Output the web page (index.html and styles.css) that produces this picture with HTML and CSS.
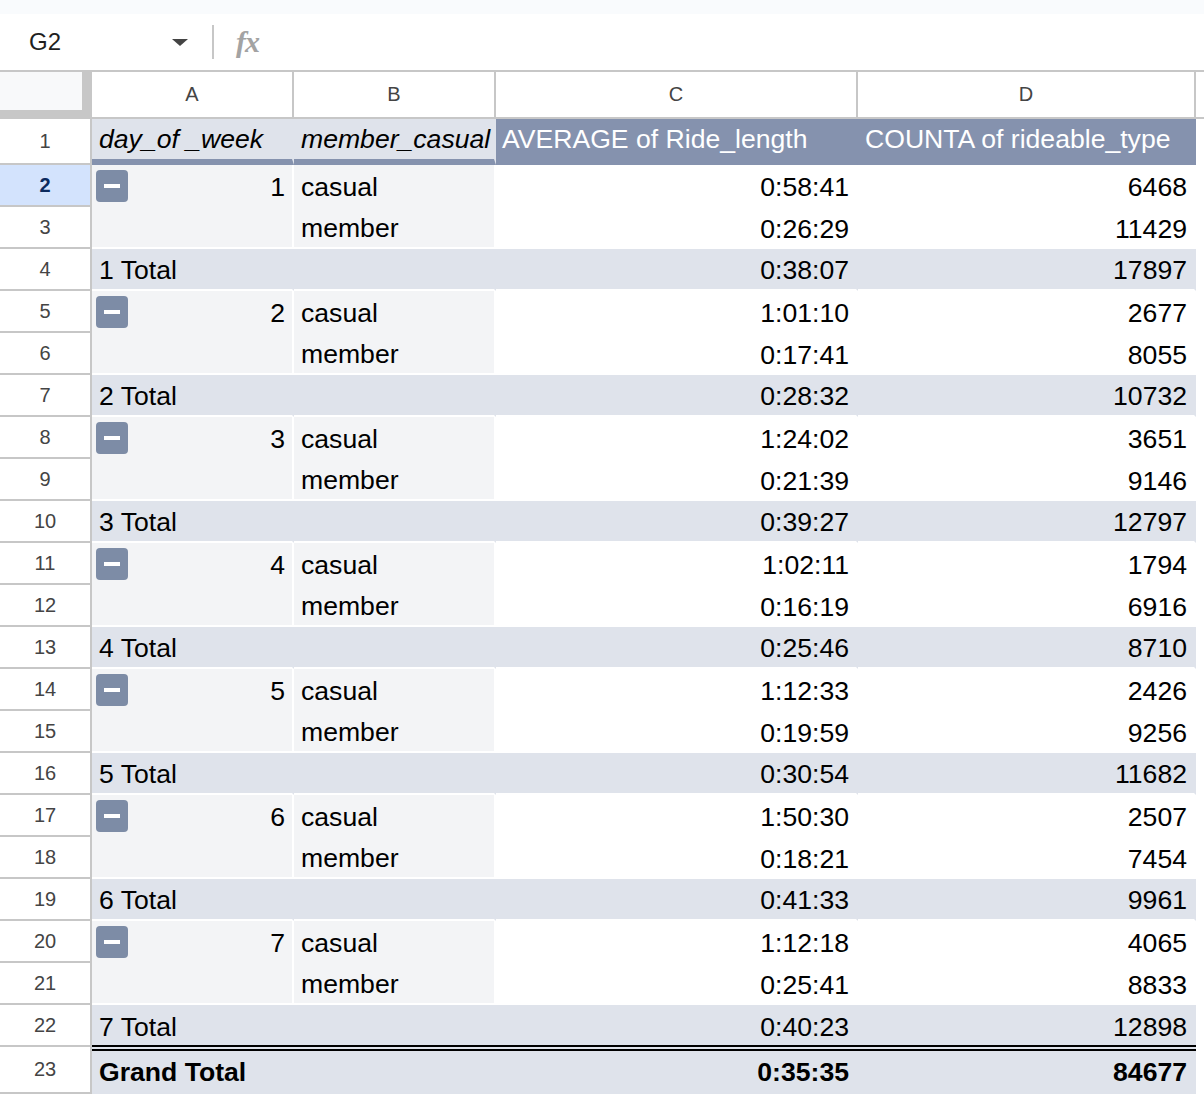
FILE: index.html
```html
<!DOCTYPE html>
<html>
<head>
<meta charset="utf-8">
<link rel="stylesheet" href="styles.css">
</head>
<body>
<div class="app">
  <div class="strip"></div>
  <div class="fbar">
    <div class="namebox"><span class="ref">G2</span><span class="caret"></span></div>
    <div class="sep"></div>
    <span class="fx">fx</span>
  </div>
  <div class="grid">
    <div class="row colhead">
      <div class="corner"></div>
      <div class="ch colA">A</div><div class="ch colB">B</div><div class="ch colC">C</div><div class="ch colD">D</div><div class="ch colE"></div>
    </div>

    <div class="row h1">
      <div class="rn">1</div>
      <div class="cell colA lite hd"><i>day_of _week</i></div>
      <div class="cell colB lite hd"><i>member_casual</i></div>
      <div class="cell colC dark hd">AVERAGE of Ride_length</div>
      <div class="cell colD dark hd">COUNTA of rideable_type</div>
      <div class="cell colE"></div>
    </div>

    <div class="row">
      <div class="rn sel">2</div>
      <div class="cell colA grp sepr"><span class="btn"></span><span class="num">1</span></div>
      <div class="cell colB grp sepr">casual</div>
      <div class="cell colC val">0:58:41</div>
      <div class="cell colD val">6468</div>
      <div class="cell colE"></div>
    </div>
    <div class="row">
      <div class="rn">3</div>
      <div class="cell colA grp sepr sepb"></div>
      <div class="cell colB grp sepr sepb">member</div>
      <div class="cell colC val">0:26:29</div>
      <div class="cell colD val">11429</div>
      <div class="cell colE"></div>
    </div>
    <div class="row">
      <div class="rn">4</div>
      <div class="cell colA tot sepb">1 Total</div>
      <div class="cell colB tot sepb"></div>
      <div class="cell colC tot val sepb">0:38:07</div>
      <div class="cell colD tot val sepb">17897</div>
      <div class="cell colE"></div>
    </div>

    <div class="row">
      <div class="rn">5</div>
      <div class="cell colA grp sepr"><span class="btn"></span><span class="num">2</span></div>
      <div class="cell colB grp sepr">casual</div>
      <div class="cell colC val">1:01:10</div>
      <div class="cell colD val">2677</div>
      <div class="cell colE"></div>
    </div>
    <div class="row">
      <div class="rn">6</div>
      <div class="cell colA grp sepr sepb"></div>
      <div class="cell colB grp sepr sepb">member</div>
      <div class="cell colC val">0:17:41</div>
      <div class="cell colD val">8055</div>
      <div class="cell colE"></div>
    </div>
    <div class="row">
      <div class="rn">7</div>
      <div class="cell colA tot sepb">2 Total</div>
      <div class="cell colB tot sepb"></div>
      <div class="cell colC tot val sepb">0:28:32</div>
      <div class="cell colD tot val sepb">10732</div>
      <div class="cell colE"></div>
    </div>

    <div class="row">
      <div class="rn">8</div>
      <div class="cell colA grp sepr"><span class="btn"></span><span class="num">3</span></div>
      <div class="cell colB grp sepr">casual</div>
      <div class="cell colC val">1:24:02</div>
      <div class="cell colD val">3651</div>
      <div class="cell colE"></div>
    </div>
    <div class="row">
      <div class="rn">9</div>
      <div class="cell colA grp sepr sepb"></div>
      <div class="cell colB grp sepr sepb">member</div>
      <div class="cell colC val">0:21:39</div>
      <div class="cell colD val">9146</div>
      <div class="cell colE"></div>
    </div>
    <div class="row">
      <div class="rn">10</div>
      <div class="cell colA tot sepb">3 Total</div>
      <div class="cell colB tot sepb"></div>
      <div class="cell colC tot val sepb">0:39:27</div>
      <div class="cell colD tot val sepb">12797</div>
      <div class="cell colE"></div>
    </div>

    <div class="row">
      <div class="rn">11</div>
      <div class="cell colA grp sepr"><span class="btn"></span><span class="num">4</span></div>
      <div class="cell colB grp sepr">casual</div>
      <div class="cell colC val">1:02:11</div>
      <div class="cell colD val">1794</div>
      <div class="cell colE"></div>
    </div>
    <div class="row">
      <div class="rn">12</div>
      <div class="cell colA grp sepr sepb"></div>
      <div class="cell colB grp sepr sepb">member</div>
      <div class="cell colC val">0:16:19</div>
      <div class="cell colD val">6916</div>
      <div class="cell colE"></div>
    </div>
    <div class="row">
      <div class="rn">13</div>
      <div class="cell colA tot sepb">4 Total</div>
      <div class="cell colB tot sepb"></div>
      <div class="cell colC tot val sepb">0:25:46</div>
      <div class="cell colD tot val sepb">8710</div>
      <div class="cell colE"></div>
    </div>

    <div class="row">
      <div class="rn">14</div>
      <div class="cell colA grp sepr"><span class="btn"></span><span class="num">5</span></div>
      <div class="cell colB grp sepr">casual</div>
      <div class="cell colC val">1:12:33</div>
      <div class="cell colD val">2426</div>
      <div class="cell colE"></div>
    </div>
    <div class="row">
      <div class="rn">15</div>
      <div class="cell colA grp sepr sepb"></div>
      <div class="cell colB grp sepr sepb">member</div>
      <div class="cell colC val">0:19:59</div>
      <div class="cell colD val">9256</div>
      <div class="cell colE"></div>
    </div>
    <div class="row">
      <div class="rn">16</div>
      <div class="cell colA tot sepb">5 Total</div>
      <div class="cell colB tot sepb"></div>
      <div class="cell colC tot val sepb">0:30:54</div>
      <div class="cell colD tot val sepb">11682</div>
      <div class="cell colE"></div>
    </div>

    <div class="row">
      <div class="rn">17</div>
      <div class="cell colA grp sepr"><span class="btn"></span><span class="num">6</span></div>
      <div class="cell colB grp sepr">casual</div>
      <div class="cell colC val">1:50:30</div>
      <div class="cell colD val">2507</div>
      <div class="cell colE"></div>
    </div>
    <div class="row">
      <div class="rn">18</div>
      <div class="cell colA grp sepr sepb"></div>
      <div class="cell colB grp sepr sepb">member</div>
      <div class="cell colC val">0:18:21</div>
      <div class="cell colD val">7454</div>
      <div class="cell colE"></div>
    </div>
    <div class="row">
      <div class="rn">19</div>
      <div class="cell colA tot sepb">6 Total</div>
      <div class="cell colB tot sepb"></div>
      <div class="cell colC tot val sepb">0:41:33</div>
      <div class="cell colD tot val sepb">9961</div>
      <div class="cell colE"></div>
    </div>

    <div class="row">
      <div class="rn">20</div>
      <div class="cell colA grp sepr"><span class="btn"></span><span class="num">7</span></div>
      <div class="cell colB grp sepr">casual</div>
      <div class="cell colC val">1:12:18</div>
      <div class="cell colD val">4065</div>
      <div class="cell colE"></div>
    </div>
    <div class="row">
      <div class="rn">21</div>
      <div class="cell colA grp sepr sepb"></div>
      <div class="cell colB grp sepr sepb">member</div>
      <div class="cell colC val">0:25:41</div>
      <div class="cell colD val">8833</div>
      <div class="cell colE"></div>
    </div>
    <div class="row">
      <div class="rn">22</div>
      <div class="cell colA tot">7 Total</div>
      <div class="cell colB tot"></div>
      <div class="cell colC tot val">0:40:23</div>
      <div class="cell colD tot val">12898</div>
      <div class="cell colE"></div>
    </div>

    <div class="row gt">
      <div class="rn">23</div>
      <div class="cell colA tot gtc">Grand Total</div>
      <div class="cell colB tot gtc"></div>
      <div class="cell colC tot val gtc">0:35:35</div>
      <div class="cell colD tot val gtc">84677</div>
      <div class="cell colE"></div>
    </div>
  </div>
</div>
</body>
</html>
```

FILE: styles.css
```css
html, body {
  margin: 0;
  padding: 0;
  background: #ffffff;
}
body {
  font-family: "Liberation Sans", Arial, sans-serif;
  color: #000;
}
.app {
  width: 1204px;
  height: 1096px;
  overflow: hidden;
}
.strip {
  height: 14px;
  background: #f9fbfd;
}
.fbar {
  height: 56px;
  border-bottom: 2px solid #c7c7c7;
  display: flex;
  align-items: center;
  background: #fff;
}
.namebox {
  width: 212px;
  display: flex;
  align-items: center;
  box-sizing: border-box;
  padding-left: 29px;
  padding-right: 24px;
}
.ref {
  font-size: 24px;
  color: #1f1f1f;
  flex: 1;
}
.caret {
  width: 0;
  height: 0;
  border-left: 8px solid transparent;
  border-right: 8px solid transparent;
  border-top: 7px solid #444;
}
.sep {
  width: 2px;
  height: 34px;
  background: #c7c7c7;
}
.fx {
  margin-left: 22px;
  font-family: "Liberation Serif", "Times New Roman", serif;
  font-style: italic;
  font-weight: bold;
  font-size: 30px;
  color: #a3a3a3;
  letter-spacing: -1px;
}
.grid {
  display: flex;
  flex-direction: column;
}
.row {
  display: flex;
  height: 42px;
}
.row.h1 { height: 46px; }
.row.gt { height: 47px; }

/* column headers */
.colhead { height: 47px; }
.corner {
  width: 82px;
  height: 47px;
  box-sizing: border-box;
  flex: none;
  background: #f8f9fa;
  border-bottom: 9px solid #c7c7c7;
}
.ch {
  box-sizing: border-box;
  height: 47px;
  border-right: 2px solid #c7c7c7;
  border-bottom: 2px solid #c7c7c7;
  display: flex;
  align-items: center;
  justify-content: center;
  font-size: 20px;
  color: #444;
  flex: none;
}
.ch.colA { width: 212px; border-left: 10px solid #c7c7c7; }
.ch.colB { width: 202px; }
.ch.colC { width: 362px; }
.ch.colD { width: 338px; }
.ch.colE { flex: 1; border-right: 0; }

/* row numbers */
.rn {
  flex: none;
  width: 92px;
  box-sizing: border-box;
  border-right: 2px solid #c7c7c7;
  border-bottom: 2px solid #c7c7c7;
  display: flex;
  align-items: center;
  justify-content: center;
  font-size: 20px;
  color: #444;
}
.rn.sel {
  background: #d3e3fd;
  color: #0b2a5e;
  font-weight: bold;
}

/* cells */
.cell {
  flex: none;
  box-sizing: border-box;
  border-right: 2px solid transparent;
  display: flex;
  align-items: center;
  padding: 3px 7px 0 7px;
  font-size: 26.6px;
  white-space: nowrap;
  position: relative;
}
.cell.colA { width: 202px; }
.cell.colB { width: 202px; }
.cell.colC { width: 362px; }
.cell.colD { width: 338px; }
.cell.colE { flex: 1; border-right: 0; }

.val { justify-content: flex-end; }

.lite { background: #dfe3eb; }
.dark { background: #8592ae; color: #fff; }
.hd {
  border-bottom: 6px solid #8592ae;
  padding-top: 0;
}
.hd.colC { padding-left: 6px; }
.grp { background: #f3f4f6; }
.tot { background: #dfe3eb; }
.sepr { border-right-color: #fff; }
.sepb { border-bottom: 2px solid #fff; }

.num { margin-left: auto; }
.btn {
  position: absolute;
  left: 4px;
  top: 5px;
  width: 32px;
  height: 32px;
  border-radius: 4px;
  background: #7d8ca6;
}
.btn::after {
  content: "";
  position: absolute;
  left: 8px;
  top: 14px;
  width: 16px;
  height: 4px;
  background: #fff;
}

.gtc {
  border-top: 6px double #000;
  border-right: 0;
  padding-right: 9px;
  font-weight: bold;
  padding-top: 0;
}
.row.gt { margin-top: -2px; height: 49px; }
.row.gt .rn { border-top: 2px solid #c7c7c7; }
```
